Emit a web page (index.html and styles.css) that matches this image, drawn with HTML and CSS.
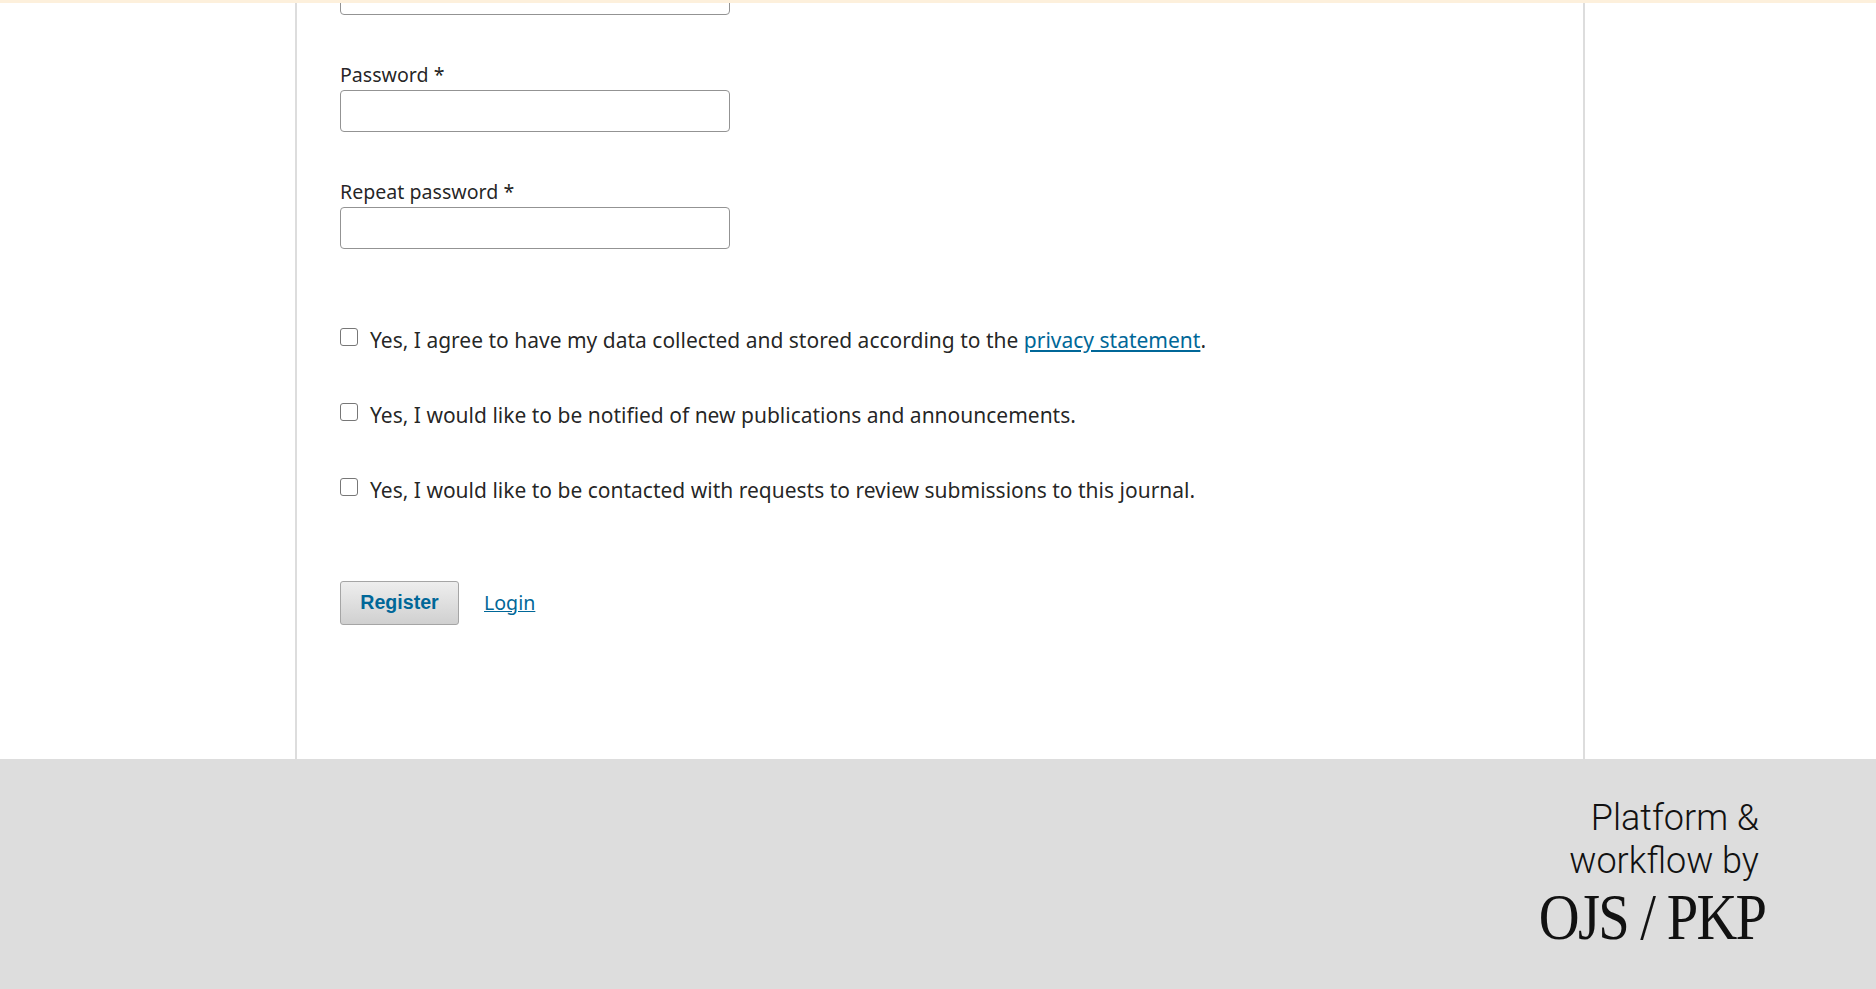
FILE: index.html
```html
<!DOCTYPE html>
<html lang="en">
<head>
  <meta charset="UTF-8">
  <title>Register</title>
  <meta name="viewport" content="width=device-width, initial-scale=1.0">
  <link rel="stylesheet" href="styles.css">
</head>
<body>
  <div class="top-line"></div>

  <div class="content-wrap">
    <main class="content">
      <form class="register">
        <div class="field">
          <input class="text-input" type="text">
        </div>
        <div class="field">
          <label class="label">Password *</label>
          <input class="text-input" type="password">
        </div>
        <div class="field">
          <label class="label">Repeat password *</label>
          <input class="text-input" type="password">
        </div>

        <div class="checks">
          <label class="check">
            <input type="checkbox">
            <span>Yes, I agree to have my data collected and stored according to the <a href="#">privacy statement</a>.</span>
          </label>
          <label class="check">
            <input type="checkbox">
            <span>Yes, I would like to be notified of new publications and announcements.</span>
          </label>
          <label class="check">
            <input type="checkbox">
            <span>Yes, I would like to be contacted with requests to review submissions to this journal.</span>
          </label>
        </div>

        <div class="buttons">
          <button class="submit" type="button">Register</button>
          <a class="login" href="#">Login</a>
        </div>
      </form>
    </main>
  </div>

  <footer class="footer">
    <div class="brand">
      <div class="brand-top">Platform &amp;<br>workflow by</div>
      <div class="brand-name">OJS / PKP</div>
    </div>
  </footer>
</body>
</html>
```

FILE: styles.css
```css
body {
  margin: 0;
  display: flex;
  flex-direction: column;
  height: 989px;
  overflow: hidden;
  background: #fff;
  font-family: "Noto Sans", sans-serif;
  color: rgba(0, 0, 0, 0.87);
}

a {
  color: #006798;
}

.top-line {
  height: 3px;
  flex: none;
  background: #fdf0dc;
}

.content-wrap {
  height: 756px;
  flex: none;
  overflow: hidden;
  padding-left: 295px;
}

.content {
  display: flow-root;
  width: 1290px;
  height: 100%;
  box-sizing: border-box;
  border-left: 2px solid #ddd;
  border-right: 2px solid #ddd;
  padding-left: 43px;
}

.register {
  margin-top: -30px;
}

.field {
  margin-bottom: 34px;
}

.label {
  display: block;
  height: 41px;
  padding-top: 10px;
  box-sizing: border-box;
  font-size: 19.6px;
  line-height: 31px;
}

.text-input {
  display: block;
  width: 390px;
  height: 42px;
  box-sizing: border-box;
  border: 1px solid #939393;
  border-radius: 4px;
  background: #fff;
}

.checks {
  margin-top: 76px;
}

.check {
  display: flex;
  align-items: flex-start;
  height: 30px;
  margin-bottom: 45px;
  font-size: 21px;
  line-height: 30px;
}

.check input {
  appearance: none;
  width: 18px;
  height: 18px;
  box-sizing: border-box;
  margin: 3px 12px 0 0;
  flex: none;
  border: 1.5px solid #777;
  border-radius: 3px;
  background: #fff;
}

.buttons {
  display: flex;
  align-items: center;
  gap: 25px;
  margin-top: 76px;
}

.submit {
  width: 119px;
  height: 44px;
  padding: 0 0 1px;
  border: 1px solid #a5a5a5;
  border-radius: 3px;
  background: linear-gradient(#eee, #d0d0d0);
  color: #006798;
  font-family: "Liberation Sans", sans-serif;
  font-size: 19.6px;
  font-weight: 700;
}

.login {
  margin-top: -2px;
  font-size: 19.6px;
}

.footer {
  flex: 1;
  display: flex;
  justify-content: flex-end;
  background: #ddd;
}

.brand {
  padding: 38px 111px 0 0;
  color: #111;
}

.brand-top {
  padding-right: 6px;
  font-family: "Roboto", sans-serif;
  font-size: 36px;
  font-weight: 300;
  line-height: 43px;
  text-align: right;
}

.brand-name {
  margin-top: 2px;
  font-family: "Liberation Serif", serif;
  font-size: 65px;
  line-height: 64px;
  letter-spacing: -2px;
  text-align: right;
  transform: scaleX(0.87);
  transform-origin: right;
}
```
